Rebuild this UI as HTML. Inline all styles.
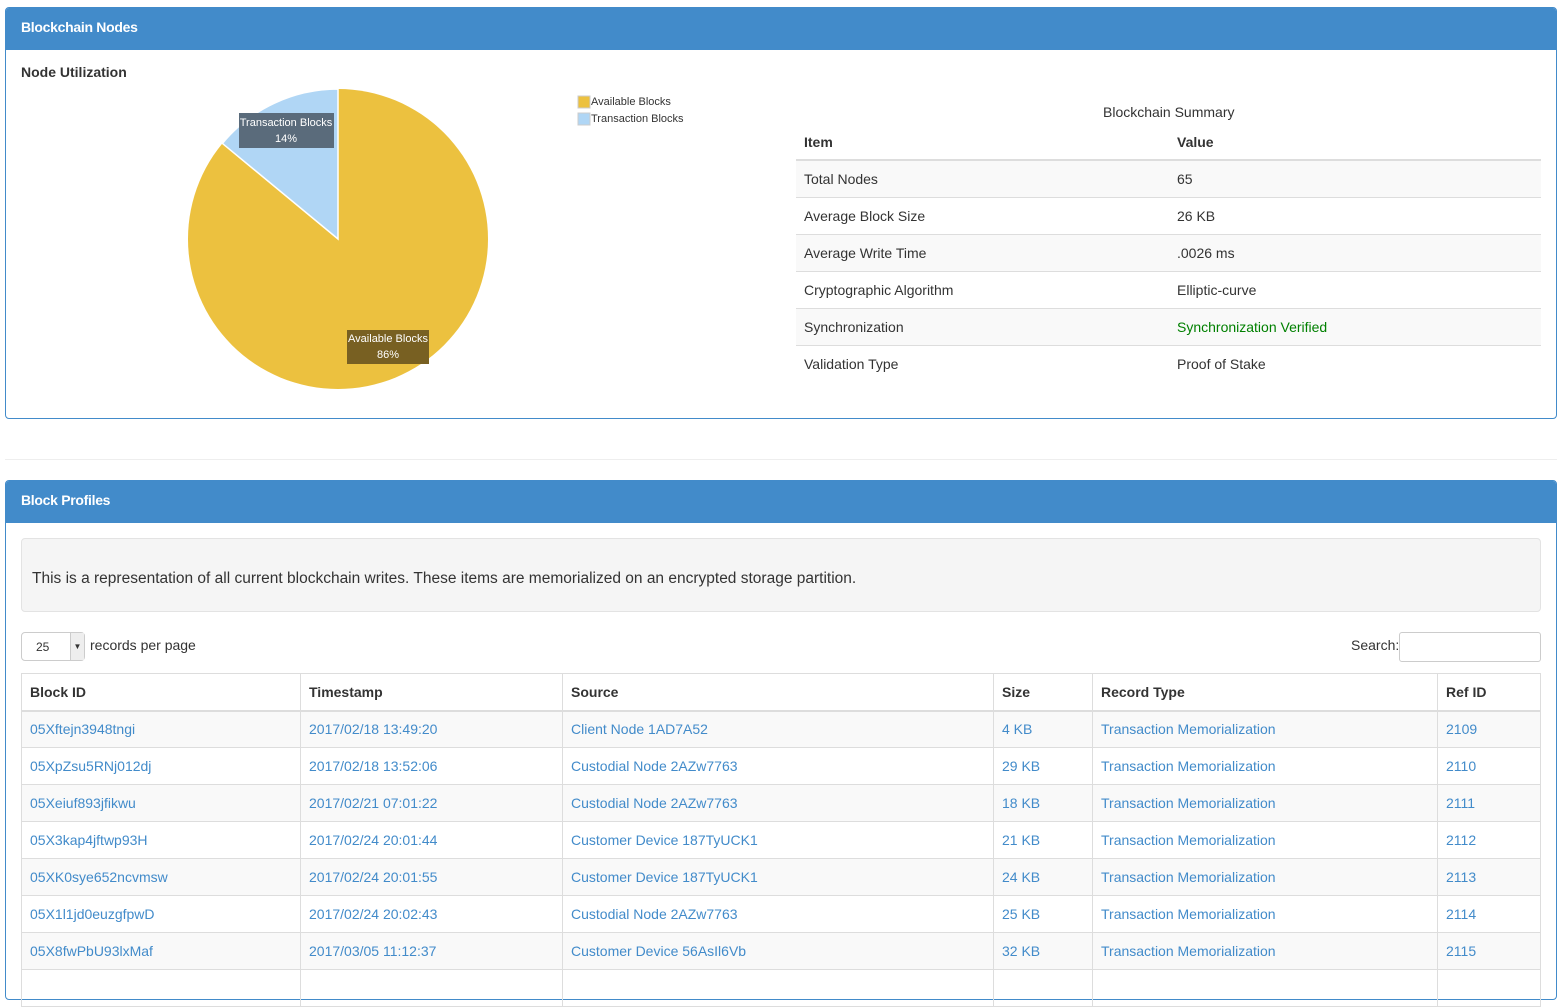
<!DOCTYPE html>
<html><head><meta charset="utf-8"><style>
*{box-sizing:border-box;margin:0;padding:0}
body{width:1565px;height:979px;overflow:hidden;background:#fff;font-family:"Liberation Sans",sans-serif;font-size:14px;color:#333;position:relative}
.abs{position:absolute}
.panel{position:absolute;left:5px;width:1552px;border:1px solid #428bca;border-radius:4px;overflow:hidden}
.ph{background:#428bca;color:#fff;height:42px;line-height:38px;padding-left:15px;font-size:14px;font-weight:bold;letter-spacing:-0.3px}
table{border-collapse:collapse}
.sum{position:absolute;left:796px;top:124px;width:745px}
.sum td,.sum th{height:37px;padding:0 8px;text-align:left;border-top:1px solid #ddd}
.sum th{border-top:none;border-bottom:2px solid #ddd;height:36px}
.sum tr:nth-child(even) td{background:#f9f9f9}
.bt{position:absolute;left:21px;top:673px;width:1520px;border:1px solid #ddd}
.bt td,.bt th{height:37px;padding:0 8px;text-align:left;border:1px solid #ddd;white-space:nowrap}
.bt th{border-bottom:2px solid #ddd}
.bt td{color:#428bca}
.bt tr:nth-child(even) td{background:#f9f9f9}
</style></head><body>
<div class="panel" style="top:7px;height:412px">
<div class="ph">Blockchain Nodes</div>
</div>
<div class="abs" style="left:21px;top:64px;font-weight:bold">Node Utilization</div>
<svg class="abs" style="left:0;top:0" width="790" height="410">
<circle cx="338" cy="239" r="150" fill="#ecc13f"/>
<path d="M338 239 L338 89 A150 150 0 0 0 222.4 143.4 Z" fill="#b0d6f5" stroke="#fff" stroke-width="1.5"/>
<rect x="239" y="113" width="95" height="35" fill="#5a6b7b"/>
<text x="286" y="126" fill="#fff" font-size="11" text-anchor="middle" font-family="Liberation Sans">Transaction Blocks</text>
<text x="286" y="142" fill="#fff" font-size="11" text-anchor="middle" font-family="Liberation Sans">14%</text>
<rect x="347" y="330" width="82" height="34" fill="#786022"/>
<text x="388" y="342" fill="#fff" font-size="11" text-anchor="middle" font-family="Liberation Sans">Available Blocks</text>
<text x="388" y="358" fill="#fff" font-size="11" text-anchor="middle" font-family="Liberation Sans">86%</text>
<rect x="578" y="96" width="12" height="12" fill="#ecc13f" stroke="#ccc"/>
<rect x="578" y="113" width="12" height="12" fill="#b0d6f5" stroke="#ccc"/>
<text x="591" y="105" font-size="11" fill="#333" font-family="Liberation Sans">Available Blocks</text>
<text x="591" y="122" font-size="11" fill="#333" font-family="Liberation Sans">Transaction Blocks</text>
</svg>
<div class="abs" style="left:1103px;top:104px">Blockchain Summary</div>
<table class="sum">
<tr><th style="width:373px">Item</th><th>Value</th></tr>
<tr><td>Total Nodes</td><td>65</td></tr>
<tr><td>Average Block Size</td><td>26 KB</td></tr>
<tr><td>Average Write Time</td><td>.0026 ms</td></tr>
<tr><td>Cryptographic Algorithm</td><td>Elliptic-curve</td></tr>
<tr><td>Synchronization</td><td style="color:#008000">Synchronization Verified</td></tr>
<tr><td>Validation Type</td><td>Proof of Stake</td></tr>
</table>
<div class="abs" style="left:5px;top:459px;width:1552px;border-top:1px solid #eee"></div>
<div class="panel" style="top:480px;height:520px">
<div class="ph">Block Profiles</div>
</div>
<div class="abs" style="left:21px;top:538px;width:1520px;height:74px;background:#f5f5f5;border:1px solid #e3e3e3;border-radius:4px;padding:31px 0 0 10px;font-size:15.5px">This is a representation of all current blockchain writes. These items are memorialized on an encrypted storage partition.</div>
<div class="abs" style="left:21px;top:632px;width:64px;height:29px;border:1px solid #ccc;border-radius:4px;font-size:12px;padding:7px 0 0 14px">25<div class="abs" style="right:0;top:0;width:14px;height:27px;border-left:1px solid #ccc;background:#eee;font-size:8px;text-align:center;line-height:27px">▼</div></div>
<div class="abs" style="left:90px;top:637px">records per page</div>
<div class="abs" style="left:1351px;top:637px">Search:</div>
<div class="abs" style="left:1399px;top:632px;width:142px;height:30px;border:1px solid #ccc;border-radius:3px"></div>
<table class="bt">
<tr><th style="width:279px">Block ID</th><th style="width:262px">Timestamp</th><th style="width:431px">Source</th><th style="width:99px">Size</th><th style="width:345px">Record Type</th><th>Ref ID</th></tr>
<tr><td>05Xftejn3948tngi</td><td>2017/02/18 13:49:20</td><td>Client Node 1AD7A52</td><td>4 KB</td><td>Transaction Memorialization</td><td>2109</td></tr>
<tr><td>05XpZsu5RNj012dj</td><td>2017/02/18 13:52:06</td><td>Custodial Node 2AZw7763</td><td>29 KB</td><td>Transaction Memorialization</td><td>2110</td></tr>
<tr><td>05Xeiuf893jfikwu</td><td>2017/02/21 07:01:22</td><td>Custodial Node 2AZw7763</td><td>18 KB</td><td>Transaction Memorialization</td><td>2111</td></tr>
<tr><td>05X3kap4jftwp93H</td><td>2017/02/24 20:01:44</td><td>Customer Device 187TyUCK1</td><td>21 KB</td><td>Transaction Memorialization</td><td>2112</td></tr>
<tr><td>05XK0sye652ncvmsw</td><td>2017/02/24 20:01:55</td><td>Customer Device 187TyUCK1</td><td>24 KB</td><td>Transaction Memorialization</td><td>2113</td></tr>
<tr><td>05X1l1jd0euzgfpwD</td><td>2017/02/24 20:02:43</td><td>Custodial Node 2AZw7763</td><td>25 KB</td><td>Transaction Memorialization</td><td>2114</td></tr>
<tr><td>05X8fwPbU93lxMaf</td><td>2017/03/05 11:12:37</td><td>Customer Device 56AsIl6Vb</td><td>32 KB</td><td>Transaction Memorialization</td><td>2115</td></tr>
<tr><td>&nbsp;</td><td></td><td></td><td></td><td></td><td></td></tr>
</table>
</body></html>
